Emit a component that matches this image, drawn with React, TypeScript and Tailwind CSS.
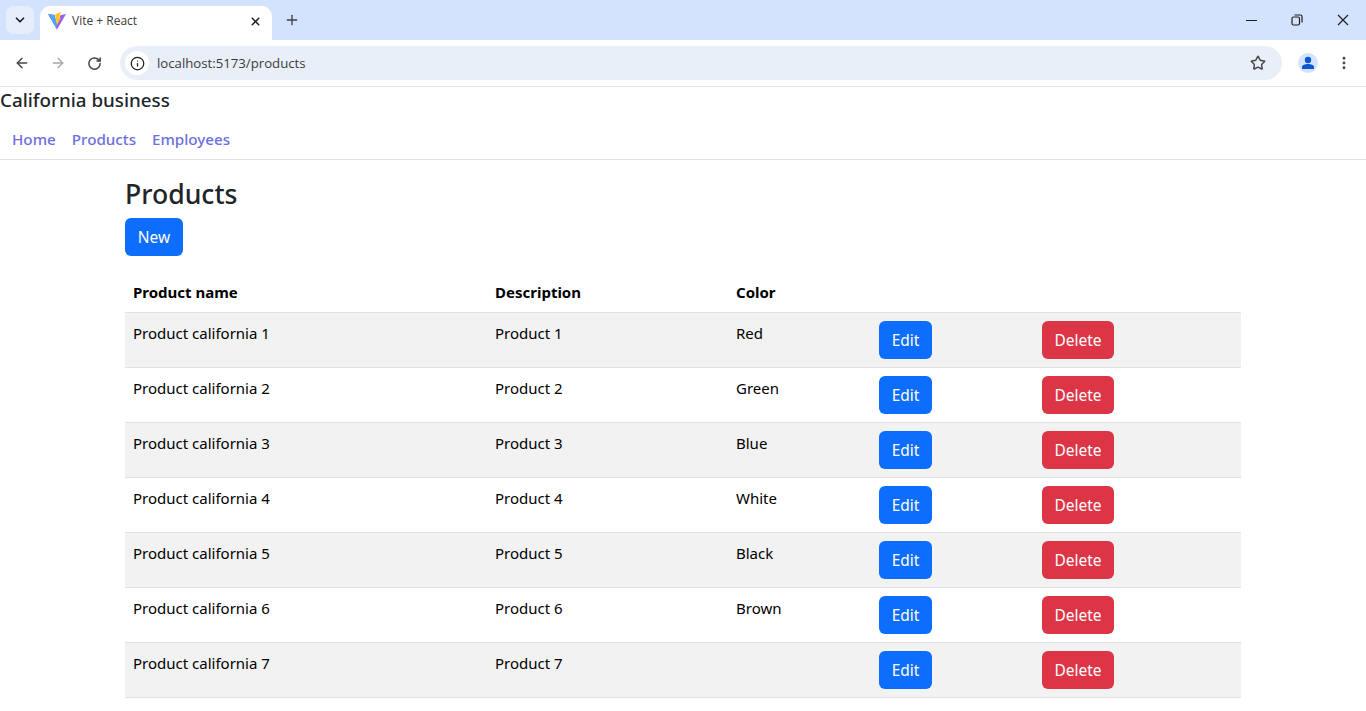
import { ArrowLeft, ArrowRight, ChevronDown, Info, MoreVertical, Plus, RotateCw, Star, X } from "lucide-react";

const products = [
  { name: "Product california 1", description: "Product 1", color: "Red" },
  { name: "Product california 2", description: "Product 2", color: "Green" },
  { name: "Product california 3", description: "Product 3", color: "Blue" },
  { name: "Product california 4", description: "Product 4", color: "White" },
  { name: "Product california 5", description: "Product 5", color: "Black" },
  { name: "Product california 6", description: "Product 6", color: "Brown" },
  { name: "Product california 7", description: "Product 7", color: "" },
];

const ViteLogo = () => (
  <svg width="18" height="18" viewBox="0 0 18 18">
    <path d="M0 2 L9 17.5 L18 2 L12.5 3.2 L9 12 L6.5 3 Z" fill="#9a5cf5" />
    <path d="M0 2 L6.5 3 L8.4 11 L9 17.5 Z" fill="#4fa6f7" />
    <path d="M7 2.6 L12.8 0 L11 6.5 L13 5.8 L9 13 Z" fill="#fdc323" />
  </svg>
);

const Browser = () => (
  <div className="font-['Open_Sans',sans-serif]">
    <div className="relative flex h-10 items-center bg-[#d3e3fd]">
      <div className="ml-[6px] flex size-7 items-center justify-center rounded-lg bg-[#e6eefc]">
        <ChevronDown size={14} strokeWidth={3} className="text-[#1f1f1f]" />
      </div>
      <div className="ml-[6px] mt-[6px] flex h-[34px] w-[232px] items-center rounded-t-[10px] bg-white pb-1 pl-[8px] pr-[9px]">
        <ViteLogo />
        <span className="ml-[6px] flex-1 text-[12px] text-[#3c3c3c]">Vite + React</span>
        <X size={13} strokeWidth={2.8} className="-translate-x-px text-[#1f1f1f]" />
      </div>
      <Plus size={16} strokeWidth={2} className="ml-[12px] text-[#3c4043]" />
      <div className="ml-auto flex items-center text-[#1f1f1f]">
        <div className="flex w-[46px] justify-center">
          <div className="h-px w-[11px] bg-[#1f1f1f]" />
        </div>
        <div className="relative flex w-[46px] justify-center">
          <svg width="12" height="12" viewBox="0 0 12 12" fill="none" stroke="currentColor" strokeWidth="1.2">
            <rect x="1" y="3" width="7.5" height="8" rx="1.5" />
            <path d="M3.5 1 H9.5 A1.5 1.5 0 0 1 11 2.5 V8.5" />
          </svg>
        </div>
        <div className="flex w-[46px] justify-center">
          <svg width="12" height="12" viewBox="0 0 12 12" stroke="currentColor" strokeWidth="1.2">
            <path d="M1 1 L11 11 M11 1 L1 11" />
          </svg>
        </div>
      </div>
    </div>
    <div className="flex h-[47px] items-center border-b border-[#dfe1e5] bg-white pr-[14px]">
      <ArrowLeft size={16} strokeWidth={2.2} className="ml-[14px] text-[#474747]" />
      <ArrowRight size={16} strokeWidth={2} className="ml-[20px] text-[#a8a8a8]" />
      <RotateCw size={15} strokeWidth={2.4} className="ml-[21px] text-[#474747]" />
      <div className="ml-[18px] flex h-[34px] flex-1 items-center rounded-full bg-[#e9eff9] pl-[5px] pr-[16px]">
        <div className="flex size-6 items-center justify-center rounded-full bg-white">
          <Info size={15} strokeWidth={2} className="text-[#1f1f1f]" />
        </div>
        <span className="ml-[8px] flex-1 pt-px text-[13.2px] text-[#3b3b3b]">localhost:5173/products</span>
        <Star size={16} strokeWidth={2.2} className="text-[#474747]" />
      </div>
      <div className="ml-[16px] flex size-5 items-center justify-center rounded-full bg-[#d3e3fd]">
        <svg width="14" height="14" viewBox="0 0 14 14" fill="#0b57d0">
          <circle cx="7" cy="4" r="3.2" />
          <path d="M1 13 V11 C1 9 4 8 7 8 C10 8 13 9 13 11 V13 Z" />
        </svg>
      </div>
      <MoreVertical size={16} strokeWidth={2.4} className="ml-[18px] text-[#474747]" />
    </div>
  </div>
);

const Row = ({ product, index }: { product: (typeof products)[number]; index: number }) => (
  <tr className={`h-[55px] border-b border-[#dee2e6] align-top ${index % 2 === 0 ? "bg-[#f2f2f2]" : "bg-white"}`}>
    <td className="px-2 pt-[9px]">{product.name}</td>
    <td className="px-2 pt-[9px]">{product.description}</td>
    <td className="px-2 pt-[9px]">{product.color}</td>
    <td className="p-2">
      <button className="h-[38px] w-[53px] rounded-md bg-[#0d6efd] pt-[2px] text-[15.5px] text-white">Edit</button>
    </td>
    <td className="p-2">
      <button className="h-[38px] w-[72px] rounded-md bg-[#dc3545] pt-[2px] text-[15.5px] text-white">Delete</button>
    </td>
  </tr>
);

export default function App() {
  return (
    <div className="h-[711px] overflow-hidden bg-white font-['Noto_Sans',sans-serif] text-[15px] text-[#212529]">
      <Browser />
      <header className="h-[73px] border-b border-[#dee2e6]">
        <div className="text-[18.8px] font-medium leading-[26px]">California business</div>
        <nav className="mt-[14px] flex gap-4 pl-3 text-[15.2px] font-medium leading-6 text-[#6c6fdc]">
          <a>Home</a>
          <a>Products</a>
          <a>Employees</a>
        </nav>
      </header>
      <main className="mx-auto w-[1116px]">
        <h1 className="mt-[15px] text-[26.6px] font-medium leading-[38px]">Products</h1>
        <button className="mt-[5px] block h-[38px] w-[58px] rounded-md bg-[#0d6efd] pt-px text-[15.5px] text-white">New</button>
        <table className="mt-[17px] w-[1116px] table-fixed border-collapse text-black">
          <colgroup>
            <col className="w-[362px]" />
            <col className="w-[241px]" />
            <col className="w-[143px]" />
            <col className="w-[163px]" />
            <col />
          </colgroup>
          <thead>
            <tr className="h-[39px] border-b border-[#dee2e6] text-left">
              <th className="px-2 font-bold">Product name</th>
              <th className="px-2 font-bold">Description</th>
              <th className="px-2 font-bold">Color</th>
              <th />
              <th />
            </tr>
          </thead>
          <tbody>
            {products.map((p, i) => (
              <Row key={p.name} product={p} index={i} />
            ))}
          </tbody>
        </table>
      </main>
    </div>
  );
}
